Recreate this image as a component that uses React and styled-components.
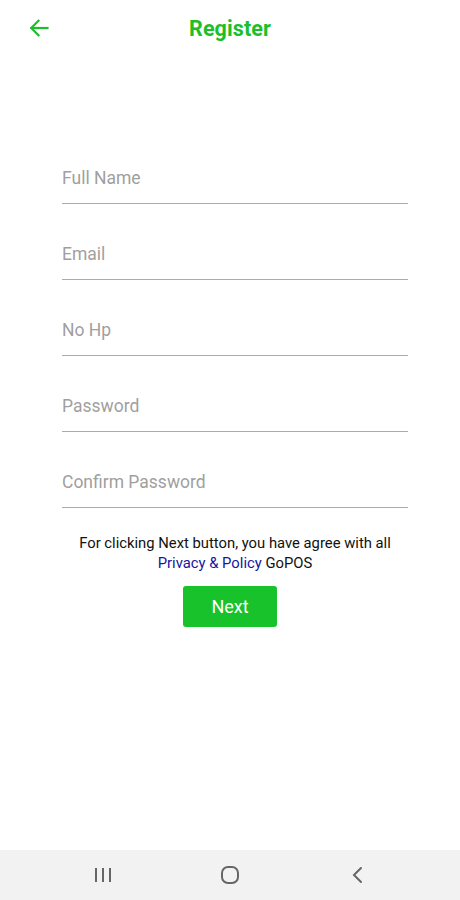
import React from "react";
import styled, { createGlobalStyle } from "styled-components";

const Global = createGlobalStyle`
  html, body { margin: 0; padding: 0; background: #fff; }
  body { font-family: Roboto, "Noto Sans", Arial, sans-serif; }
  * { box-sizing: border-box; }
`;

const Screen = styled.div`
  width: 460px;
  height: 900px;
  display: flex;
  flex-direction: column;
  background: #fff;
`;

const Header = styled.header`
  height: 56px;
  display: grid;
  grid-template-columns: 80px 1fr 80px;
  align-items: center;
`;

const BackButton = styled.button`
  border: 0;
  background: none;
  padding: 0 0 0 29px;
  display: flex;
  align-items: center;
  height: 56px;
  cursor: pointer;
`;

const Title = styled.h1`
  margin: 0;
  text-align: center;
  font-size: 21.5px;
  font-weight: 700;
  color: #1bbf2a;
  letter-spacing: 0.1px;
`;

const Form = styled.form`
  margin: 72px 0 0;
  display: flex;
  flex-direction: column;
`;

const Fields = styled.div`
  margin: 0 52px 0 62px;
  display: flex;
  flex-direction: column;
`;

const Field = styled.label`
  height: 76px;
  display: flex;
  align-items: flex-end;
  padding-bottom: 15px;
  border-bottom: 1.5px solid #ababab;
`;

const Input = styled.input`
  width: 100%;
  border: 0;
  outline: none;
  padding: 0;
  font-family: inherit;
  font-size: 17.5px;
  line-height: 20px;
  height: 20px;
  color: #333;
  background: transparent;
  &::placeholder { color: #9f9f9f; }
`;

const Terms = styled.p`
  margin: 25px 52px 0 62px;
  text-align: center;
  font-size: 14.8px;
  line-height: 20px;
  color: #111;
`;

const Link = styled.a`
  color: #1616a0;
  text-decoration: none;
`;

const NextButton = styled.button`
  align-self: center;
  margin-top: 13px;
  width: 94px;
  height: 41px;
  border: 0;
  border-radius: 3px;
  background: #17c22b;
  color: #fff;
  font-family: inherit;
  font-size: 18px;
  cursor: pointer;
`;

const NavBar = styled.nav`
  margin-top: auto;
  height: 50px;
  background: #f2f2f2;
  display: grid;
  grid-template-columns: repeat(3, 1fr);
  align-items: center;
  justify-items: center;
  padding: 0 39px;
`;

const NavIcon = styled.svg`
  display: block;
`;

const fields = ["Full Name", "Email", "No Hp", "Password", "Confirm Password"];

export default function App() {
  return (
    <>
      <Global />
      <Screen>
        <Header>
          <BackButton type="button" aria-label="Back">
            <svg width="20" height="18" viewBox="0 0 20 18" fill="none" stroke="#1bbf2a" strokeWidth="2.2" strokeLinecap="square">
              <path d="M18.5 9H2.5" />
              <path d="M9.5 1.8L2.3 9l7.2 7.2" />
            </svg>
          </BackButton>
          <Title>Register</Title>
          <div />
        </Header>
        <Form onSubmit={(e) => e.preventDefault()}>
          <Fields>
            {fields.map((f) => (
              <Field key={f}>
                <Input placeholder={f} type={f.includes("Password") ? "password" : "text"} />
              </Field>
            ))}
          </Fields>
          <Terms>
            For clicking Next button, you have agree with all
            <br />
            <Link href="#">Privacy &amp; Policy</Link> GoPOS
          </Terms>
          <NextButton type="submit">Next</NextButton>
        </Form>
        <NavBar>
          <NavIcon width="20" height="18" viewBox="0 0 20 18" fill="none" stroke="#666" strokeWidth="2">
            <path d="M3 2v14M10 2v14M17 2v14" />
          </NavIcon>
          <NavIcon width="20" height="20" viewBox="0 0 20 20" fill="none" stroke="#666" strokeWidth="2">
            <rect x="2" y="2" width="16" height="16" rx="6" />
          </NavIcon>
          <NavIcon width="14" height="18" viewBox="0 0 14 18" fill="none" stroke="#666" strokeWidth="2" strokeLinecap="round">
            <path d="M11 2L4 9l7 7" />
          </NavIcon>
        </NavBar>
      </Screen>
    </>
  );
}
